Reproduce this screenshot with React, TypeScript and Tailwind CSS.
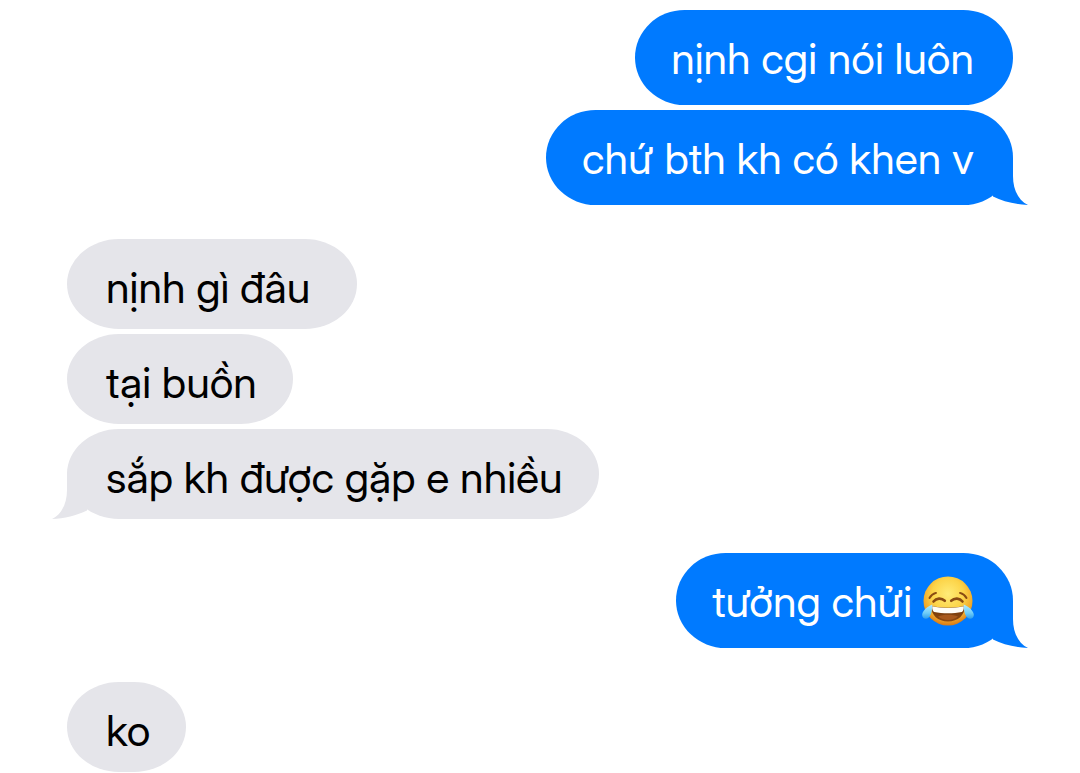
import React from "react";
import { clsx } from "clsx";

type Sender = "me" | "them";

interface Group {
  sender: Sender;
  tail: boolean;
  messages: { text: string; emoji?: boolean }[];
}

const groups: Group[] = [
  { sender: "me", tail: true, messages: [{ text: "nịnh cgi nói luôn" }, { text: "chứ bth kh có khen v" }] },
  {
    sender: "them",
    tail: true,
    messages: [{ text: "nịnh gì đâu\u00a0" }, { text: "tại buồn" }, { text: "sắp kh được gặp e nhiều" }],
  },
  { sender: "me", tail: true, messages: [{ text: "tưởng chửi", emoji: true }] },
  { sender: "them", tail: false, messages: [{ text: "ko" }] },
];

function JoyEmoji() {
  return (
    <svg role="img" aria-label="😂" viewBox="0 0 52 52" className="size-[52px] shrink-0">
      <defs>
        <radialGradient id="joy-face" cx="0.5" cy="0.36" r="0.64">
          <stop offset="0" stopColor="#ffec78" />
          <stop offset="0.5" stopColor="#fcd449" />
          <stop offset="0.8" stopColor="#f2aa2b" />
          <stop offset="1" stopColor="#d87a16" />
        </radialGradient>
        <linearGradient id="joy-tear" x1="0" y1="0" x2="0" y2="1">
          <stop offset="0" stopColor="#b4ecff" />
          <stop offset="0.6" stopColor="#6fcdf8" />
          <stop offset="1" stopColor="#2f9fec" />
        </linearGradient>
        <linearGradient id="joy-mouth" x1="0" y1="0" x2="0" y2="1">
          <stop offset="0" stopColor="#6e3708" />
          <stop offset="1" stopColor="#8f4a10" />
        </linearGradient>
      </defs>
      <circle cx="26" cy="26" r="24.5" fill="url(#joy-face)" />
      <g fill="none" stroke="#8a4b12" strokeLinecap="round" strokeWidth="2">
        <path d="M7.5 23c1.4-2.5 3.6-4.3 6.5-5.1" />
        <path d="M44.5 23c-1.4-2.5-3.6-4.3-6.5-5.1" />
        <path d="M11.5 26.5c2.8-3.6 8-3.8 11.3-.7" strokeWidth="2.6" />
        <path d="M40.5 26.5c-2.8-3.6-8-3.8-11.3-.7" strokeWidth="2.6" />
      </g>
      <path d="M9.5 31c10.5 2.3 22.5 2.3 33 0 .7 9-6.5 15.500-16.500 15.500S8.800 40 9.500 31z" fill="url(#joy-mouth)" />
      <path
        d="M10.200 31.300c10.200 2.200 21.400 2.200 31.600 0 .2 3-.6 4.900-2 5.700-8.500 1.800-19.100 1.800-27.600 0-1.400-.8-2.200-2.700-2-5.700z"
        fill="#fffdf5"
      />
      <path d="M16 41.500c5-2.500 15-2.500 20 0-5 4.500-15 4.500-20 0z" fill="#a8591a" />
      <path
        d="M10.300 29.500C6 31 .6 35.500.2 39.500c-.4 3.900 3.700 5.200 6.300 3.200 3.200-2.500 3.700-8.700 3.800-13.200z"
        fill="url(#joy-tear)"
      />
      <path
        d="M41.700 29.500c4.300 1.500 9.700 6 10.100 10 .4 3.900-3.700 5.200-6.300 3.200-3.200-2.500-3.700-8.700-3.800-13.200z"
        fill="url(#joy-tear)"
      />
    </svg>
  );
}

function Tail({ sender }: { sender: Sender }) {
  return (
    <svg
      aria-hidden="true"
      viewBox="0 0 48 55"
      className={clsx(
        "absolute bottom-0 h-[55px] w-12",
        sender === "me" ? "-right-[15px] fill-[#007aff]" : "-left-[15px] -scale-x-100 fill-[#e5e5ea]",
      )}
    >
      <path d="M13 8H33V26C33 39 38 50 48 55C36 54.5 23 51.5 13 46.5Z" />
    </svg>
  );
}

function Bubble({ sender, tail, children }: { sender: Sender; tail: boolean; children: React.ReactNode }) {
  return (
    <li
      className={clsx(
        "relative flex max-w-[80%] items-center gap-[10px] pt-[22px] text-[43px] leading-[52px]",
        sender === "me"
          ? "rounded-[50px/48px] bg-[#007aff] pr-[39px] pb-[21px] pl-9 text-white"
          : "rounded-[52px/45px] bg-[#e5e5ea] pr-9 pb-4 pl-[39px] text-black",
      )}
    >
      {tail && <Tail sender={sender} />}
      <span className="relative flex items-center gap-[10px]">{children}</span>
    </li>
  );
}

export default function App() {
  return (
    <main className="flex min-h-screen flex-col gap-[34px] bg-white px-[67px] pt-[10px] font-['Inter_Display','Inter','Liberation_Sans',sans-serif] [font-variation-settings:'opsz'_32]">
      {groups.map((group, g) => (
        <ul key={g} className={clsx("flex flex-col gap-[5px]", group.sender === "me" ? "items-end" : "items-start")}>
          {group.messages.map((message, m) => (
            <Bubble key={m} sender={group.sender} tail={group.tail && m === group.messages.length - 1}>
              <span>{message.text}</span>
              {message.emoji && <JoyEmoji />}
            </Bubble>
          ))}
        </ul>
      ))}
    </main>
  );
}
